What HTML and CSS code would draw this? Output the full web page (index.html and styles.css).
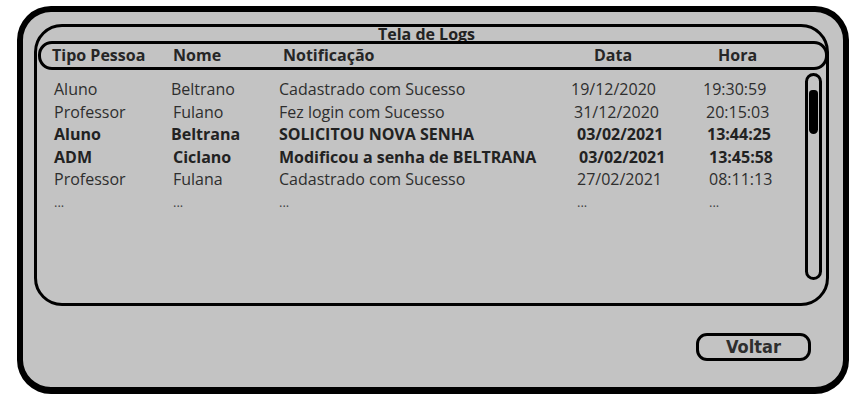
FILE: index.html
```html
<!DOCTYPE html>
<html lang="pt-BR">
<head>
<meta charset="utf-8">
<title>Tela de Logs</title>
<link rel="stylesheet" href="styles.css">
</head>
<body>
<div class="frame">
  <div class="panel">
    <div class="title">Tela de Logs</div>
    <div class="head">
      <span>Tipo Pessoa</span>
      <span>Nome</span>
      <span>Notificação</span>
      <span>Data</span>
      <span>Hora</span>
    </div>
    <div class="body">
      <div class="rows">
        <span>Aluno</span><span>Beltrano</span><span>Cadastrado com Sucesso</span><span>19/12/2020</span><span>19:30:59</span>
        <span>Professor</span><span class="o2">Fulano</span><span>Fez login com Sucesso</span><span class="o3">31/12/2020</span><span class="o3">20:15:03</span>
        <span class="b">Aluno</span><span class="b">Beltrana</span><span class="b">SOLICITOU NOVA SENHA</span><span class="b o6">03/02/2021</span><span class="b o4">13:44:25</span>
        <span class="b">ADM</span><span class="b o2">Ciclano</span><span class="b">Modificou a senha de BELTRANA</span><span class="b o8">03/02/2021</span><span class="b o6">13:45:58</span>
        <span>Professor</span><span class="o2">Fulana</span><span>Cadastrado com Sucesso</span><span class="o6">27/02/2021</span><span class="o6">08:11:13</span>
        <span class="dots">...</span><span class="dots o2">...</span><span class="dots">...</span><span class="dots o6">...</span><span class="dots o6">...</span>
      </div>
      <div class="scroll"><div class="thumb"></div></div>
    </div>
  </div>
  <div class="actions">
    <button class="btn">Voltar</button>
  </div>
</div>
</body>
</html>
```
FILE: styles.css
```css
html, body {
  margin: 0;
  padding: 0;
  background: #ffffff;
}
body {
  font-family: "Open Sans", "Noto Sans", sans-serif;
  color: #2e2e2e;
}
.frame {
  box-sizing: border-box;
  margin: 6px 0 0 17px;
  width: 832px;
  height: 388px;
  border: 6px solid #000;
  border-bottom-width: 7px;
  border-radius: 34px;
  background: #c3c3c3;
  padding: 12px 14px 0 11px;
  display: flex;
  flex-direction: column;
}
.panel {
  box-sizing: border-box;
  height: 282px;
  border: 3px solid #000;
  border-radius: 28px;
  display: flex;
  flex-direction: column;
}
.title {
  height: 14px;
  line-height: 14px;
  font-size: 16px;
  font-weight: 700;
  text-align: center;
  padding-right: 10px;
  color: #222;
}
.head {
  box-sizing: border-box;
  height: 29px;
  margin: 0 -2px 0 1px;
  border: 3px solid #000;
  border-radius: 14px;
  display: grid;
  grid-template-columns: 121px 110px 311px 124px auto;
  align-items: center;
  padding-left: 11px;
  padding-bottom: 1px;
  font-size: 16px;
  font-weight: 700;
  color: #262626;
}
.body {
  flex: 1;
  display: flex;
  min-height: 0;
}
.rows {
  flex: 1;
  padding: 8px 0 0 17px;
  display: grid;
  grid-template-columns: 117px 108px 292px 132px auto;
  grid-auto-rows: 22.5px;
  align-content: start;
  font-size: 16px;
  line-height: 22.5px;
  white-space: nowrap;
}
.b {
  font-weight: 700;
  color: #222;
}
.dots {
  font-size: 13px;
  color: #444;
}
.o2 { padding-left: 2px; }
.o3 { padding-left: 3px; }
.o4 { padding-left: 4px; }
.o6 { padding-left: 6px; }
.o8 { padding-left: 8px; }
.scroll {
  box-sizing: border-box;
  width: 17px;
  height: 207px;
  margin: 3px 4px 0 0;
  border: 3px solid #000;
  border-radius: 9px;
  padding: 14px 1px 0 1px;
}
.thumb {
  height: 44px;
  background: #000;
  border-radius: 4px 4px 5px 5px;
}
.actions {
  display: flex;
  justify-content: flex-end;
  padding: 27px 18px 0 0;
}
.btn {
  box-sizing: border-box;
  width: 115px;
  height: 28px;
  border: 3px solid #000;
  border-radius: 11px;
  background: #c3c3c3;
  font-family: "Liberation Sans Narrow", "DejaVu Sans Condensed", "Liberation Sans", sans-serif;
  font-weight: 700;
  font-size: 18px;
  color: #2e2e2e;
  padding: 0;
  line-height: 22px;
}
```
